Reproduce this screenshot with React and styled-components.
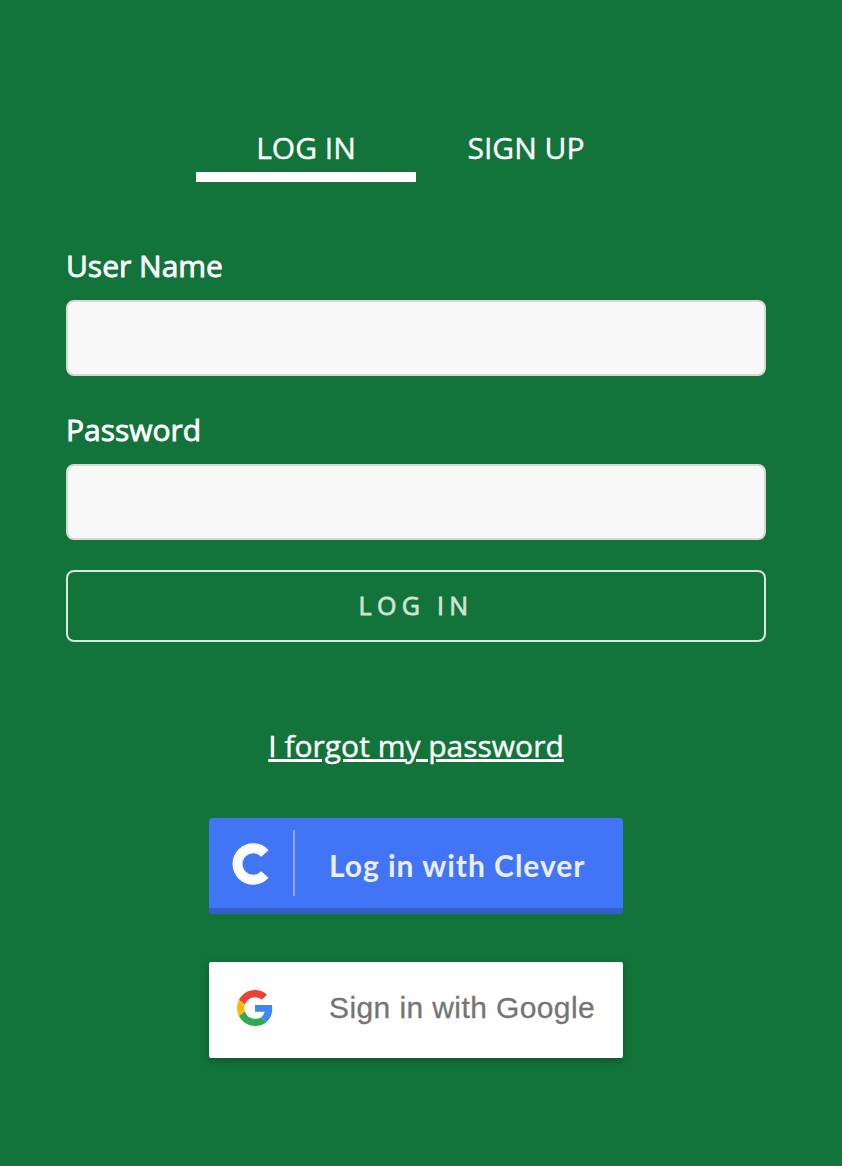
import React from "react";
import styled, { createGlobalStyle } from "styled-components";

const GlobalStyle = createGlobalStyle`
  *, *::before, *::after { box-sizing: border-box; }
  body {
    margin: 0;
    background: #12743b;
    color: #fff;
    font-family: "Open Sans", sans-serif;
    font-size: 30px;
    line-height: 41px;
  }
`;

const Page = styled.main`
  width: 842px;
  height: 1166px;
  padding: 127px 76px 0 66px;
  display: flex;
  flex-direction: column;
  overflow: hidden;
`;

const Tabs = styled.nav`
  display: flex;
  justify-content: center;
`;

const Tab = styled.button`
  width: 220px;
  height: 55px;
  padding: 0 0 4px;
  border: 0;
  border-bottom: 10px solid ${(p) => (p.$active ? "#fff" : "transparent")};
  background: none;
  color: #fff;
  font: inherit;
  text-align: center;
  -webkit-text-stroke: 0.4px currentColor;
`;

const Form = styled.form`
  display: flex;
  flex-direction: column;
  margin-top: 63px;
`;

const Field = styled.label`
  display: flex;
  flex-direction: column;
  gap: 14px;
  margin-bottom: ${(p) => p.$gap};
`;

const FieldName = styled.span`
  height: 41px;
  -webkit-text-stroke: 0.8px currentColor;
`;

const Input = styled.input`
  width: 100%;
  height: 76px;
  padding: 0 20px;
  border: 2px solid #d6dad2;
  border-radius: 8px;
  background: #f8f8f8;
  font: inherit;
  outline: none;
`;

const SubmitButton = styled.button`
  height: 72px;
  padding: 0 0 2px;
  border: 2px solid #d8e8d8;
  border-radius: 8px;
  background: transparent;
  color: #d0e2d4;
  font: 400 25px/34px "Open Sans", sans-serif;
  letter-spacing: 5.3px;
  -webkit-text-stroke: 0.8px currentColor;
`;

const ForgotLink = styled.a`
  align-self: center;
  margin-top: 83px;
  color: #fff;
  text-decoration: underline;
  text-decoration-thickness: 3px;
  text-underline-offset: 2px;
  -webkit-text-stroke: 0.4px currentColor;
`;

const Providers = styled.div`
  display: flex;
  flex-direction: column;
  align-items: center;
  gap: 48px;
  margin-top: 52px;
`;

const ProviderButton = styled.button`
  display: flex;
  align-items: center;
  width: 414px;
  height: 96px;
  padding: 0;
  border: 0;
  text-align: left;
  white-space: nowrap;
`;

const CleverButton = styled(ProviderButton)`
  border-bottom: 6px solid #345ec8;
  border-radius: 4px 4px 0 0;
  background: #4275f5;
  color: #e9effe;
  font: 700 30px/40px Lato, sans-serif;
  letter-spacing: 0.98px;
`;

const GoogleButton = styled(ProviderButton)`
  padding-bottom: 4px;
  border-radius: 2px;
  background: #fff;
  box-shadow: 0 3px 8px rgba(0, 0, 0, 0.25);
  color: #757575;
  font: 400 30px/40px "Liberation Sans", sans-serif;
  letter-spacing: 0.4px;
  -webkit-text-stroke: 0.3px currentColor;
`;

const Divider = styled.span`
  flex: none;
  width: 2px;
  height: 66px;
  margin-right: 34px;
  background: #8ba9f8;
`;

const CleverIcon = styled.svg`
  flex: none;
  width: 38px;
  height: 42px;
  margin: 2px 23px 0;
`;

const GoogleIcon = styled.svg`
  flex: none;
  width: 36px;
  height: 36px;
  margin: 0 56px 0 28px;
`;

const CleverText = styled.span`
  padding-top: 3px;
`;

export default function App() {
  return (
    <>
      <GlobalStyle />
      <Page>
        <Tabs>
          <Tab type="button" $active>LOG IN</Tab>
          <Tab type="button">SIGN UP</Tab>
        </Tabs>
        <Form>
          <Field $gap="33px">
            <FieldName>User Name</FieldName>
            <Input type="text" />
          </Field>
          <Field $gap="30px">
            <FieldName>Password</FieldName>
            <Input type="password" />
          </Field>
          <SubmitButton type="button">LOG IN</SubmitButton>
        </Form>
        <ForgotLink href="#">I forgot my password</ForgotLink>
        <Providers>
          <CleverButton type="button">
            <CleverIcon viewBox="0 0 38 42" aria-hidden="true">
              <path
                d="M32.9 10.5A15.7 15.7 0 1 0 32.9 31.5"
                fill="none"
                stroke="#fafbff"
                strokeWidth="10"
              />
            </CleverIcon>
            <Divider />
            <CleverText>Log in with Clever</CleverText>
          </CleverButton>
          <GoogleButton type="button">
            <GoogleIcon viewBox="0 0 48 48" aria-hidden="true">
              <path fill="#EA4335" d="M24 9.5c3.54 0 6.71 1.22 9.21 3.6l6.85-6.85C35.9 2.38 30.47 0 24 0 14.62 0 6.51 5.38 2.56 13.22l7.98 6.19C12.43 13.72 17.74 9.5 24 9.5z" />
              <path fill="#4285F4" d="M46.98 24.55c0-1.57-.15-3.09-.38-4.55H24v9.02h12.94c-.58 2.96-2.26 5.48-4.78 7.18l7.73 6c4.51-4.18 7.09-10.36 7.09-17.65z" />
              <path fill="#FBBC05" d="M10.53 28.59c-.48-1.45-.76-2.99-.76-4.59s.27-3.14.76-4.59l-7.98-6.19C.92 16.46 0 20.12 0 24c0 3.88.92 7.54 2.56 10.78l7.97-6.19z" />
              <path fill="#34A853" d="M24 48c6.48 0 11.93-2.13 15.89-5.81l-7.73-6c-2.15 1.45-4.92 2.3-8.16 2.3-6.26 0-11.57-4.22-13.47-9.91l-7.98 6.19C6.51 42.62 14.62 48 24 48z" />
            </GoogleIcon>
            <span>Sign in with Google</span>
          </GoogleButton>
        </Providers>
      </Page>
    </>
  );
}
